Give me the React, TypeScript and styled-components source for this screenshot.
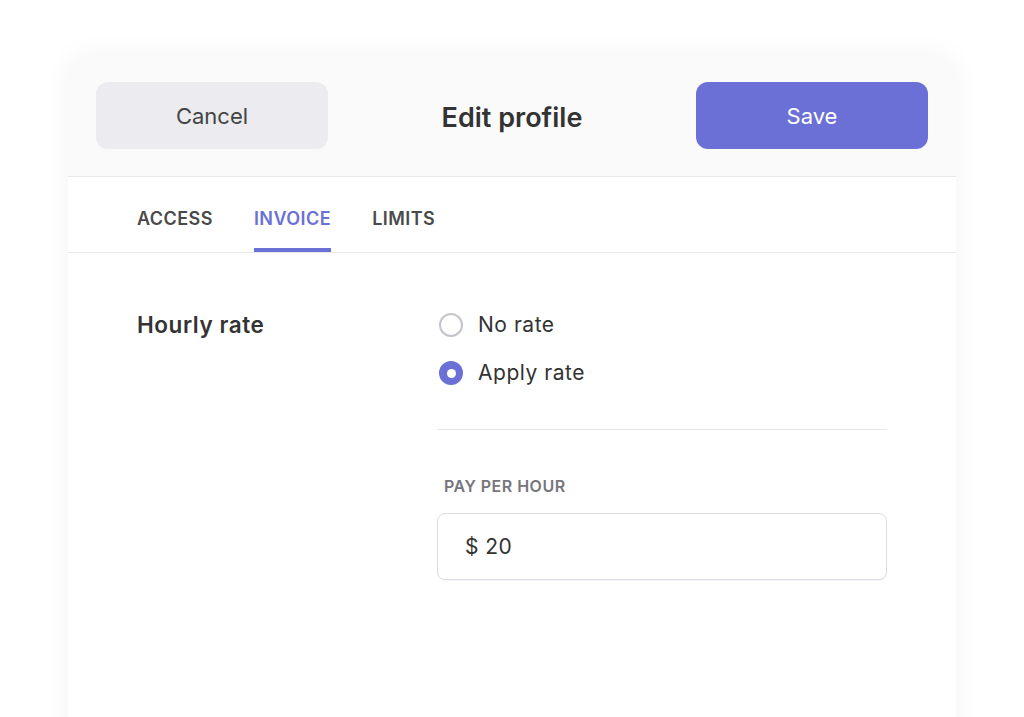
import { useState } from 'react';
import styled, { createGlobalStyle } from 'styled-components';

const ACCENT = '#6b70d6';

const GlobalStyle = createGlobalStyle`
  html, body { margin: 0; padding: 0; background: #ffffff; }
  body { font-family: Inter, "Noto Sans", sans-serif; color: #333; }
  * { box-sizing: border-box; }
`;

const Page = styled.div`
  padding-top: 55px;
  height: 717px;
  overflow: hidden;
  display: flex;
  justify-content: center;
`;

const Card = styled.div`
  width: 888px;
  min-height: 720px;
  background: #ffffff;
  border-radius: 22px 22px 0 0;
  box-shadow: 0 0 28px rgba(30, 30, 60, 0.05);
  overflow: hidden;
`;

const Header = styled.div`
  display: flex;
  align-items: center;
  justify-content: space-between;
  padding: 27px 28px 27px;
  background: #fafafb;
  border-bottom: 1.5px solid #e8e8ee;
`;

const Btn = styled.button<{ primary?: boolean }>`
  width: 232px;
  height: 67px;
  padding-top: 2px;
  border: none;
  border-radius: 12px;
  font-family: inherit;
  font-size: 22px;
  font-weight: 400;
  cursor: pointer;
  background: ${({ primary }) => (primary ? ACCENT : '#ebebf0')};
  color: ${({ primary }) => (primary ? '#ffffff' : '#444')};
`;

const Title = styled.h1`
  margin: 0;
  padding-top: 3px;
  font-size: 27px;
  font-weight: 600;
  color: #333;
`;

const Tabs = styled.div`
  display: flex;
  gap: 41px;
  padding: 0 69px;
  height: 76px;
  border-bottom: 1.5px solid #e8e8ee;
`;

const Tab = styled.div<{ active?: boolean }>`
  display: flex;
  align-items: center;
  padding-top: 11px;
  font-size: 18px;
  font-weight: 600;
  letter-spacing: 0.025em;
  color: ${({ active }) => (active ? ACCENT : '#4a4a4a')};
  border-bottom: 4px solid ${({ active }) => (active ? ACCENT : 'transparent')};
  cursor: pointer;
`;

const Body = styled.div`
  display: grid;
  grid-template-columns: 300px 450px;
  padding: 60px 69px 0;
`;

const FieldLabel = styled.div`
  font-size: 22.5px;
  font-weight: 600;
  letter-spacing: 0.025em;
  color: #333;
  line-height: 24px;
`;

const Options = styled.div`
  display: flex;
  flex-direction: column;
  gap: 24px;
  padding-left: 2px;
`;

const Option = styled.label`
  display: flex;
  align-items: center;
  gap: 15px;
  font-size: 21px;
  letter-spacing: 0.025em;
  color: #333;
  line-height: 24px;
  cursor: pointer;
`;

const Radio = styled.span<{ checked: boolean }>`
  width: 24px;
  height: 24px;
  border-radius: 50%;
  flex-shrink: 0;
  display: flex;
  align-items: center;
  justify-content: center;
  background: ${({ checked }) => (checked ? ACCENT : '#fff')};
  border: ${({ checked }) => (checked ? 'none' : '2px solid #c4c4cc')};
  &::after {
    content: '';
    width: 9px;
    height: 9px;
    border-radius: 50%;
    background: #fff;
    display: ${({ checked }) => (checked ? 'block' : 'none')};
  }
`;

const RightCol = styled.div`
  display: flex;
  flex-direction: column;
`;

const Divider = styled.hr`
  border: none;
  border-top: 1.5px solid #e6e6ec;
  margin: 44px 0 0;
`;

const SmallLabel = styled.div`
  margin-top: 46px;
  padding-left: 7px;
  font-size: 16px;
  font-weight: 600;
  color: #76767c;
  letter-spacing: 0.03em;
`;

const InputBox = styled.div`
  margin-top: 17px;
  height: 67px;
  border: 1.5px solid #dcdce4;
  border-radius: 8px;
  box-shadow: 0 1px 1px rgba(0, 0, 0, 0.04);
  display: flex;
  align-items: center;
  padding: 0 0 0 27px;
  font-size: 21px;
  letter-spacing: 0.02em;
  color: #333;
`;

export default function App() {
  const [tab, setTab] = useState('INVOICE');
  const [rate, setRate] = useState('apply');

  return (
    <>
      <GlobalStyle />
      <Page>
        <Card>
          <Header>
            <Btn>Cancel</Btn>
            <Title>Edit profile</Title>
            <Btn primary>Save</Btn>
          </Header>
          <Tabs>
            {['ACCESS', 'INVOICE', 'LIMITS'].map((t) => (
              <Tab key={t} active={tab === t} onClick={() => setTab(t)}>
                {t}
              </Tab>
            ))}
          </Tabs>
          <Body>
            <FieldLabel>Hourly rate</FieldLabel>
            <RightCol>
              <Options>
                <Option onClick={() => setRate('none')}>
                  <Radio checked={rate === 'none'} />
                  No rate
                </Option>
                <Option onClick={() => setRate('apply')}>
                  <Radio checked={rate === 'apply'} />
                  Apply rate
                </Option>
              </Options>
              <Divider />
              <SmallLabel>PAY PER HOUR</SmallLabel>
              <InputBox>$ 20</InputBox>
            </RightCol>
          </Body>
        </Card>
      </Page>
    </>
  );
}
